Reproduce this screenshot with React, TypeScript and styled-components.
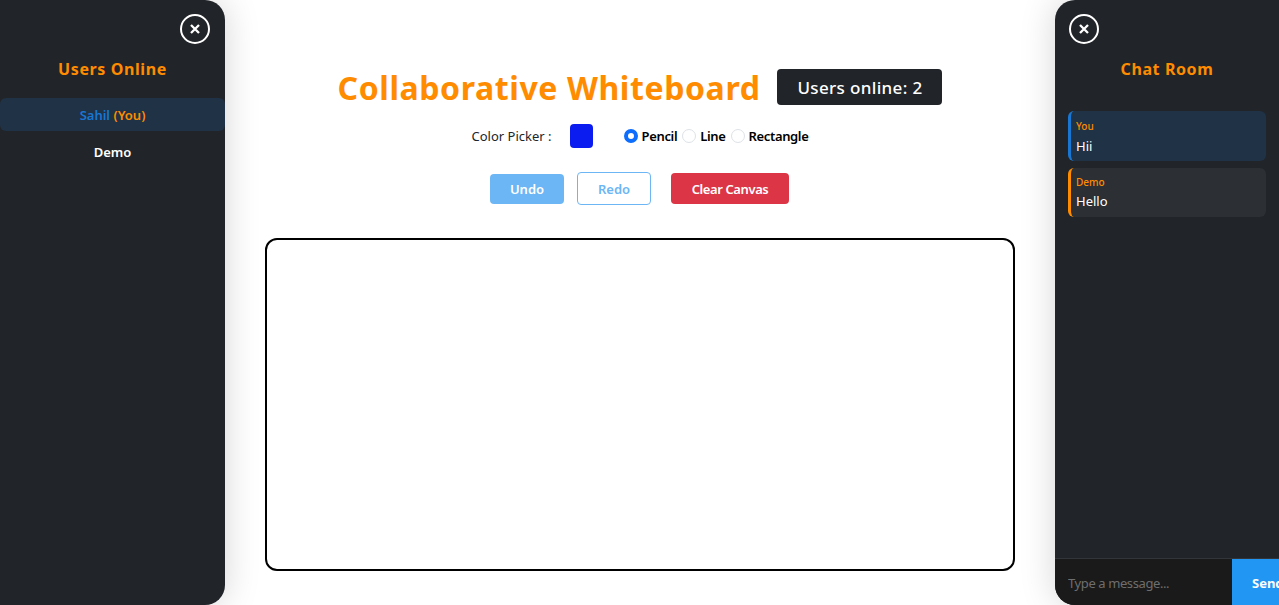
import React, { useState } from "react";
import styled, { createGlobalStyle } from "styled-components";

const GlobalStyle = createGlobalStyle`
  * {
    box-sizing: border-box;
  }
  html, body {
    margin: 0;
    padding: 0;
    height: 100%;
    overflow: hidden;
    background: #fff;
    font-family: "Noto Sans", "Open Sans", sans-serif;
  }
`;

const Page = styled.div`
  display: flex;
  width: 100%;
  height: 605px;
  overflow: hidden;
`;

const Panel = styled.aside<{ $side: "left" | "right" }>`
  flex: 0 0 ${props => (props.$side === "left" ? "225px" : "224px")};
  height: 605px;
  display: flex;
  flex-direction: column;
  overflow: hidden;
  background: #212529;
  color: #fff;
  border-radius: ${props => (props.$side === "left" ? "0 20px 20px 0" : "20px 0 0 20px")};
  box-shadow: 0 0 35px rgba(0, 0, 0, 0.17);
  z-index: 2;
`;

const PanelTop = styled.div<{ $side: "left" | "right" }>`
  display: flex;
  justify-content: ${props => (props.$side === "left" ? "flex-end" : "flex-start")};
  padding: 14px 15px 0 14px;
`;

const CloseButton = styled.button`
  width: 30px;
  height: 30px;
  padding: 0;
  display: flex;
  align-items: center;
  justify-content: center;
  background: transparent;
  border: 2px solid #fff;
  border-radius: 50%;
  color: #fff;
`;

const PanelTitle = styled.h2`
  margin: 13px 0 0;
  font-size: 16px;
  line-height: 24px;
  font-weight: 700;
  letter-spacing: 0.6px;
  text-align: center;
  color: #ff8c00;
`;

const UserList = styled.ul`
  list-style: none;
  margin: 17px 0 0;
  padding: 0;
  display: flex;
  flex-direction: column;
  gap: 4px;
`;

const UserRow = styled.li<{ $active?: boolean }>`
  height: 33px;
  line-height: 35px;
  text-align: center;
  font-size: 13px;
  font-weight: 600;
  border-radius: 6px;
  background: ${props => (props.$active ? "#203246" : "transparent")};
`;

const UserName = styled.span`
  color: #1976d2;
`;

const YouTag = styled.span`
  color: #ff8c00;
`;

const Messages = styled.div`
  flex: 1;
  padding: 30px 13px 0;
  display: flex;
  flex-direction: column;
  gap: 7px;
`;

const Message = styled.div<{ $own?: boolean }>`
  height: ${props => (props.$own ? "50px" : "49px")};
  padding: ${props => (props.$own ? "8px" : "7px")} 8px 0 5px;
  border-radius: 6px;
  border-left: 3px solid ${props => (props.$own ? "#1976d2" : "#ff8c00")};
  background: ${props => (props.$own ? "#203246" : "#2c2f33")};
`;

const Sender = styled.div`
  font-size: 10px;
  line-height: 14px;
  font-weight: 500;
  color: #ff8c00;
`;

const MessageText = styled.div<{ $own?: boolean }>`
  margin-top: ${props => (props.$own ? "4px" : "3px")};
  font-size: 13px;
  line-height: 18px;
  color: #fff;
`;

const ChatForm = styled.form`
  flex: 0 0 47px;
  display: flex;
  border-top: 1px solid #32363a;
`;

const ChatInput = styled.input`
  flex: 0 0 177px;
  min-width: 0;
  padding: 2px 13px 0;
  border: none;
  outline: none;
  background: #1a1a1a;
  color: #fff;
  font-family: inherit;
  font-size: 13px;
  letter-spacing: -0.4px;
  &::placeholder {
    color: #6e6e6e;
  }
`;

const SendButton = styled.button`
  flex: 0 0 64px;
  padding: 2px 0 0 20px;
  border: none;
  background: #2196f3;
  color: #fff;
  font-family: inherit;
  font-size: 13px;
  font-weight: 700;
  text-align: left;
`;

const Main = styled.main`
  flex: 1;
  min-width: 0;
  display: flex;
  flex-direction: column;
  align-items: center;
  padding-top: 69px;
`;

const TitleRow = styled.div`
  display: flex;
  align-items: center;
  gap: 17px;
  height: 36px;
`;

const Title = styled.h1`
  margin: 0;
  padding-top: 2px;
  font-size: 32px;
  line-height: 36px;
  font-weight: 700;
  letter-spacing: 0.6px;
  color: #ff8c00;
  white-space: nowrap;
`;

const OnlineBadge = styled.div`
  width: 165px;
  height: 36px;
  padding-top: 1px;
  line-height: 36px;
  text-align: center;
  border-radius: 4px;
  background: #212529;
  color: #fff;
  font-size: 17px;
  font-weight: 500;
  letter-spacing: 0.35px;
`;

const ToolRow = styled.div`
  display: flex;
  align-items: center;
  height: 24px;
  margin-top: 19px;
  font-size: 13px;
  color: #212529;
`;

const PickerLabel = styled.label`
  margin-right: 18px;
  white-space: nowrap;
`;

const ColorInput = styled.input`
  appearance: none;
  width: 23px;
  height: 24px;
  margin: 0 31px 0 0;
  padding: 0;
  border: none;
  background: none;
  &::-webkit-color-swatch-wrapper {
    padding: 0;
  }
  &::-webkit-color-swatch {
    border: none;
    border-radius: 4px;
  }
`;

const RadioGroup = styled.div`
  display: flex;
  align-items: center;
  gap: 5px;
`;

const RadioLabel = styled.label`
  display: flex;
  align-items: center;
  gap: 4px;
  font-weight: 600;
  letter-spacing: -0.35px;
  color: #000;
  white-space: nowrap;
`;

const Radio = styled.input`
  appearance: none;
  width: 14px;
  height: 14px;
  margin: 0;
  border-radius: 50%;
  border: 1px solid #dee2e6;
  background: #fff;
  &:checked {
    border: 4px solid #0d6efd;
  }
`;

const ButtonRow = styled.div`
  display: flex;
  align-items: center;
  margin: 24px 1px 0 0;
  height: 33px;
`;

const ActionButton = styled.button<{ $variant: "undo" | "redo" | "clear" }>`
  width: ${props => (props.$variant === "clear" ? "118px" : "74px")};
  height: ${props => (props.$variant === "undo" ? "30px" : props.$variant === "redo" ? "33px" : "31px")};
  margin-left: ${props => (props.$variant === "undo" ? "0" : props.$variant === "redo" ? "13px" : "20px")};
  padding: 0;
  border-radius: 4px;
  font-family: inherit;
  font-size: 13px;
  font-weight: 600;
  letter-spacing: ${props => (props.$variant === "clear" ? "-0.4px" : "0")};
  border: ${props => (props.$variant === "redo" ? "1.5px solid #6cb6f5" : "none")};
  background: ${props =>
    props.$variant === "undo" ? "#6cb6f5" : props.$variant === "redo" ? "#fff" : "#dc3545"};
  color: ${props => (props.$variant === "redo" ? "#6cb6f5" : "#fff")};
`;

const Board = styled.canvas`
  display: block;
  width: 750px;
  height: 333px;
  margin-top: 33px;
  background: #fff;
  border: 2px solid #000;
  border-radius: 12px;
`;

const CloseIcon = () => (
  <svg width="10" height="10" viewBox="0 0 10 10" fill="none" stroke="currentColor" strokeWidth="2.3">
    <path d="M1 1l8 8M9 1l-8 8" />
  </svg>
);

const App = () => {
  const [tool, setTool] = useState("pencil");
  const [color, setColor] = useState("#0a1cf0");

  return (
    <>
      <GlobalStyle />
      <Page>
        <Panel $side="left">
          <PanelTop $side="left">
            <CloseButton type="button" aria-label="Close users">
              <CloseIcon />
            </CloseButton>
          </PanelTop>
          <PanelTitle>Users Online</PanelTitle>
          <UserList>
            <UserRow $active>
              <UserName>Sahil</UserName> <YouTag>(You)</YouTag>
            </UserRow>
            <UserRow>Demo</UserRow>
          </UserList>
        </Panel>

        <Main>
          <TitleRow>
            <Title>Collaborative Whiteboard</Title>
            <OnlineBadge>Users online: 2</OnlineBadge>
          </TitleRow>
          <ToolRow>
            <PickerLabel htmlFor="color">Color Picker :</PickerLabel>
            <ColorInput id="color" type="color" value={color} onChange={e => setColor(e.target.value)} />
            <RadioGroup>
              {["Pencil", "Line", "Rectangle"].map(name => (
                <RadioLabel key={name}>
                  <Radio
                    type="radio"
                    name="tool"
                    checked={tool === name.toLowerCase()}
                    onChange={() => setTool(name.toLowerCase())}
                  />
                  {name}
                </RadioLabel>
              ))}
            </RadioGroup>
          </ToolRow>
          <ButtonRow>
            <ActionButton type="button" $variant="undo">Undo</ActionButton>
            <ActionButton type="button" $variant="redo">Redo</ActionButton>
            <ActionButton type="button" $variant="clear">Clear Canvas</ActionButton>
          </ButtonRow>
          <Board />
        </Main>

        <Panel $side="right">
          <PanelTop $side="right">
            <CloseButton type="button" aria-label="Close chat">
              <CloseIcon />
            </CloseButton>
          </PanelTop>
          <PanelTitle>Chat Room</PanelTitle>
          <Messages>
            <Message $own>
              <Sender>You</Sender>
              <MessageText $own>Hii</MessageText>
            </Message>
            <Message>
              <Sender>Demo</Sender>
              <MessageText>Hello</MessageText>
            </Message>
          </Messages>
          <ChatForm onSubmit={e => e.preventDefault()}>
            <ChatInput placeholder="Type a message..." />
            <SendButton type="submit">Send</SendButton>
          </ChatForm>
        </Panel>
      </Page>
    </>
  );
};

export default App;
